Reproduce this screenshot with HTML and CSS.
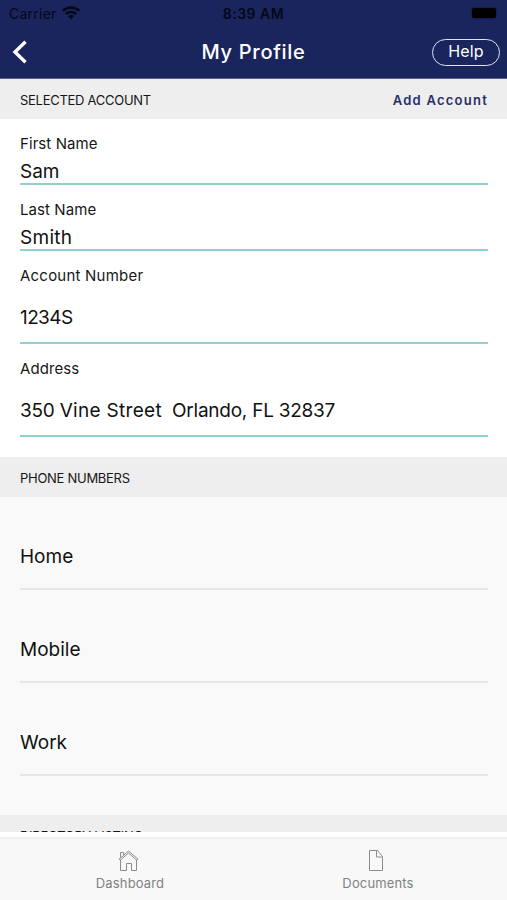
FILE: index.html
```html
<!DOCTYPE html>
<html lang="en">
<head>
<meta charset="utf-8">
<title>My Profile</title>
<link rel="stylesheet" href="styles.css">
</head>
<body>
<div class="app">
  <header class="header">
    <div class="status">
      <div class="carrier"><span>Carrier</span>
        <svg width="18" height="14" viewBox="0 0 18 14" fill="none" stroke="#05071a" stroke-width="2.5"><path d="M.8 4.800C5.300.400 12.700.400 17.200 4.800M3.800 8C6.800 5.300 11.200 5.300 14.200 8"/><path d="M6 10.200Q9 7.800 12 10.200L9 13.200Z" fill="#05071a" stroke="none"/></svg>
      </div>
      <span class="clock">8:39 AM</span>
      <span class="battery"></span>
    </div>
    <div class="nav">
      <svg class="back" width="16" height="24" viewBox="0 0 16 24" fill="none" stroke="#fff" stroke-width="3.400"><path d="M13.500 1.800 3 12l10.500 10.200"/></svg>
      <h1 class="title">My Profile</h1>
      <a class="help">Help</a>
    </div>
  </header>
  <main class="content">
    <div class="section"><h2 class="heading">SELECTED ACCOUNT</h2><a class="add">Add Account</a></div>
    <div class="fields">
      <div class="field"><label class="label">First Name</label><div class="value">Sam</div></div>
      <div class="field"><label class="label">Last Name</label><div class="value wide">Smith</div></div>
      <div class="field tall"><label class="label account">Account Number</label><div class="value number">1234S</div></div>
      <div class="field tall"><label class="label">Address</label><div class="value address">350 <span class="street">Vine Street</span>&nbsp; Orlando, FL 32837</div></div>
    </div>
    <div class="section"><h2 class="heading">PHONE NUMBERS</h2></div>
    <div class="phones">
      <div class="phone">Home</div>
      <div class="phone">Mobile</div>
      <div class="phone">Work</div>
    </div>
    <div class="section"><h2 class="heading">DIRECTORY LISTING</h2></div>
  </main>
  <nav class="tabs">
    <a class="tab dash">
      <svg width="22" height="22" viewBox="0 0 22 22" fill="none" stroke="#8c8c8c" stroke-width="1"><path d="M2.500 10V20.500H8.500V13.500H13.500V20.500H18.500V10M1 9.200 10.500 1l9.500 8.200-1 1.200L10.500 3 2 10.400ZM2.500 7.500V2.500H5.500V5"/></svg>
      <span>Dashboard</span>
    </a>
    <a class="tab docs">
      <svg width="16" height="22" viewBox="0 0 16 22" fill="none" stroke="#8c8c8c" stroke-width="1"><path d="M1.500.5H9.500L14.500 6.500V20.500H1.500ZM8.500.5V7H14.500"/></svg>
      <span>Documents</span>
    </a>
  </nav>
</div>
</body>
</html>
```
FILE: styles.css
```css
* { box-sizing: border-box; }
body { margin: 0; font-family: Inter, "Liberation Sans", sans-serif; color: #171717; }
h1, h2 { margin: 0; font-weight: 400; }
svg { display: block; flex: none; }
.app { width: 507px; height: 900px; display: flex; flex-direction: column; overflow: hidden; background: #fff; }
.header { height: 79px; flex: none; background: #1a255d; border-bottom: 1px solid #55608d; }
.status { height: 27px; display: grid; grid-template-columns: 1fr auto 1fr; align-items: center; padding: 0 9px; color: #05071a; font-size: 14px; }
.carrier { display: flex; gap: 5px; align-items: center; letter-spacing: .25px; }
.carrier svg { margin-bottom: 1px; }
.clock { font-weight: 600; letter-spacing: .5px; }
.battery { justify-self: end; width: 24px; height: 10px; border-radius: 2px; background: #000; margin: 0 2px 1px 0; box-shadow: 0 0 2px #080b22; }
.nav { height: 50px; display: grid; grid-template-columns: 1fr auto 1fr; align-items: center; padding: 0 7px; color: #fff; }
.back { margin-left: 5px; }
.title { font-size: 20px; font-weight: 500; letter-spacing: .7px; line-height: 24px; }
.help { justify-self: end; width: 68px; height: 27px; border: 1px solid #dfe2f2; border-radius: 14px; font-size: 16px; line-height: 23px; letter-spacing: .2px; text-align: center; }
.content { height: 753px; flex: none; overflow: hidden; }
.section { height: 40px; display: flex; align-items: center; justify-content: space-between; padding: 2px 19px 0 20px; background: #eee; }
.heading { font-size: 13px; line-height: 18px; letter-spacing: -.28px; }
.add { color: #28306b; font-size: 13px; font-weight: 600; letter-spacing: 1.25px; }
.fields { height: 338px; padding: 0 19px 0 20px; }
.field { height: 66px; padding-top: 15px; border-bottom: 2px solid #8fd2ce; }
.label { display: block; font-size: 15px; line-height: 20px; letter-spacing: .08px; }
.account { letter-spacing: .22px; }
.value { font-size: 19px; line-height: 24px; padding-top: 6px; white-space: nowrap; color: #111; }
.wide { letter-spacing: .3px; }
.number { letter-spacing: -.6px; }
.address { letter-spacing: -.25px; }
.street { letter-spacing: .3px; }
.tall { height: 93px; }
.tall .value { padding-top: 20px; }
.phones { height: 318px; background: #f9f9f9; padding: 0 19px 0 20px; }
.phone { height: 93px; padding-top: 47px; border-bottom: 2px solid #e6e6e6; font-size: 19px; line-height: 25px; color: #111; }
.tabs { margin-top: 5px; height: 63px; flex: none; display: flex; border-top: 2px solid #f0f0f0; background: #f8f8f8; color: #818181; font-size: 13px; letter-spacing: .15px; }
.tab { flex: 1; display: flex; flex-direction: column; align-items: center; gap: 3px; padding-top: 11px; }
.dash { padding-left: 6px; }
.dash svg { margin-right: 3px; }
.docs { padding-right: 5px; }
.docs svg { margin-right: 4px; }
```
